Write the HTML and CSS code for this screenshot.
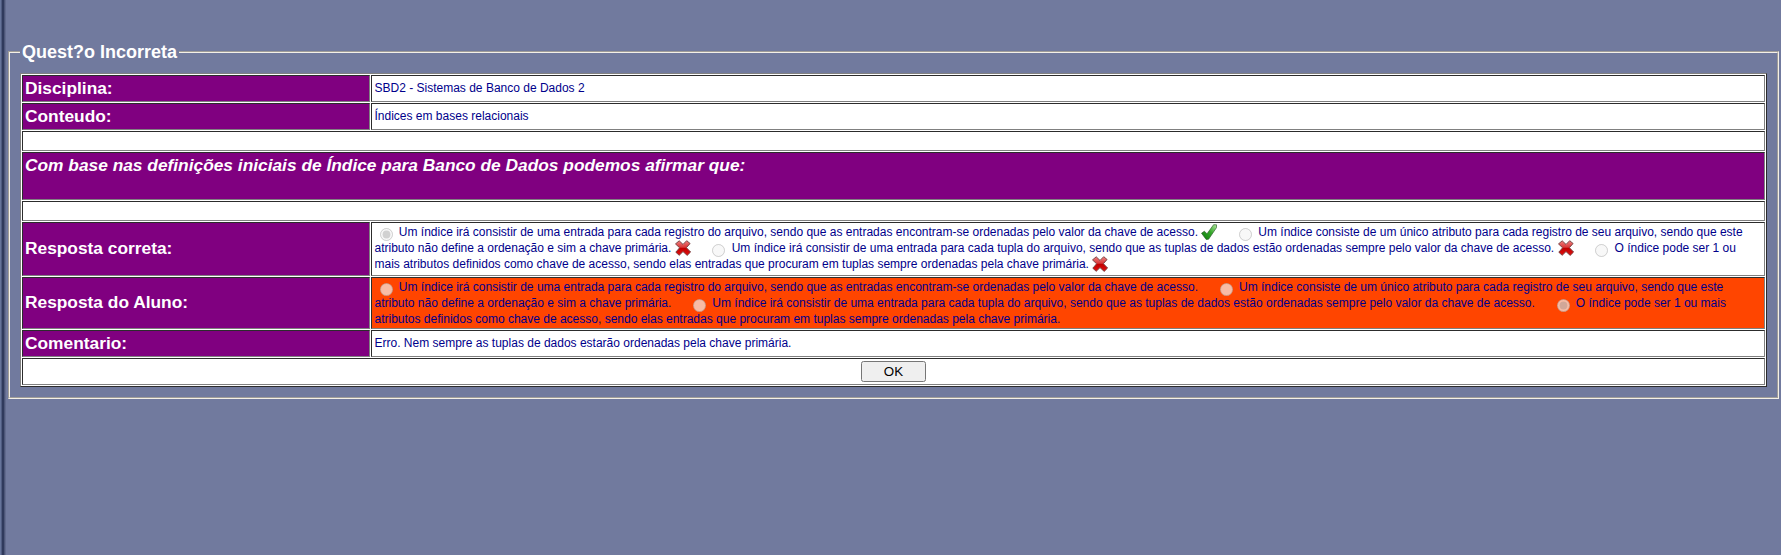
FILE: index.html
```
<!DOCTYPE html>
<html lang="pt-BR">
<head>
<meta charset="utf-8">
<title>Questão Incorreta</title>
<link rel="stylesheet" href="styles.css">
</head>
<body>
<svg class="defs" width="0" height="0" aria-hidden="true">
  <defs>
    <linearGradient id="red" x1="0" y1="0" x2="0" y2="1"><stop offset="0" stop-color="#f08080"/><stop offset=".45" stop-color="#d83a3a"/><stop offset=".5" stop-color="#c00000"/><stop offset="1" stop-color="#e01010"/></linearGradient>
    <linearGradient id="green" x1="1" y1="0" x2="0" y2="1"><stop offset="0" stop-color="#b5e8a0"/><stop offset=".45" stop-color="#35a82a"/><stop offset="1" stop-color="#087808"/></linearGradient>
    <symbol id="wrong" viewBox="0 0 16 16"><path d="M4.2.8 8 4.4 11.7.7l3.4 2.8-3.7 4.2 4.2 4.3-3.4 3.4L8 11.6l-3.8 3.7L.8 12.2l3.8-4.4L.5 3.9z" fill="url(#red)" stroke="#704040" stroke-width=".9" stroke-linejoin="round"/></symbol>
    <symbol id="right" viewBox="0 0 16 16"><path d="M.5 9.2 3.4 7.2 6 9.8 12.6.7 15.6.8 15.5 3.6 7.6 15.2 5.2 15.5z" fill="url(#green)" stroke="#306030" stroke-width=".7" stroke-linejoin="round"/></symbol>
  </defs>
</svg>
<fieldset class="panel">
<legend class="title">Quest?o Incorreta</legend>
<table class="grid" border="1" cellspacing="1" cellpadding="1">
<tr class="row"><td class="label">Disciplina:</td><td class="value">SBD2 - Sistemas de Banco de Dados 2</td></tr>
<tr class="row"><td class="label">Conteudo:</td><td class="value">Índices em bases relacionais</td></tr>
<tr class="gap"><td colspan="2"></td></tr>
<tr class="question"><td class="label" colspan="2"><i>Com base nas definições iniciais de Índice para Banco de Dados podemos afirmar que:</i></td></tr>
<tr class="gap"><td colspan="2"></td></tr>
<tr class="correct"><td class="label">Resposta correta:</td><td class="value answers"><input type="radio" disabled checked>&nbsp;Um índice irá consistir de uma entrada para cada registro do arquivo, sendo que as entradas encontram-se ordenadas pelo valor da chave de acesso.&nbsp;<svg class="mark"><use href="#right"/></svg>&nbsp;&nbsp;&nbsp;&nbsp; <input type="radio" disabled>&nbsp;Um índice consiste de um único atributo para cada registro de seu arquivo, sendo que este atributo não define a ordenação e sim a chave primária.&nbsp;<svg class="mark"><use href="#wrong"/></svg>&nbsp;&nbsp;&nbsp;&nbsp; <input type="radio" disabled>&nbsp;Um índice irá consistir de uma entrada para cada tupla do arquivo, sendo que as tuplas de dados estão ordenadas sempre pelo valor da chave de acesso.&nbsp;<svg class="mark"><use href="#wrong"/></svg>&nbsp;&nbsp;&nbsp;&nbsp; <input type="radio" disabled>&nbsp;O índice pode ser 1 ou mais atributos definidos como chave de acesso, sendo elas entradas que procuram em tuplas sempre ordenadas pela chave primária.&nbsp;<svg class="mark"><use href="#wrong"/></svg></td></tr>
<tr class="student"><td class="label">Resposta do Aluno:</td><td class="value answers chosen"><input type="radio" disabled>&nbsp;Um índice irá consistir de uma entrada para cada registro do arquivo, sendo que as entradas encontram-se ordenadas pelo valor da chave de acesso.&nbsp;&nbsp;&nbsp;&nbsp; <input type="radio" disabled>&nbsp;Um índice consiste de um único atributo para cada registro de seu arquivo, sendo que este atributo não define a ordenação e sim a chave primária.&nbsp;&nbsp;&nbsp;&nbsp; <input type="radio" disabled>&nbsp;Um índice irá consistir de uma entrada para cada tupla do arquivo, sendo que as tuplas de dados estão ordenadas sempre pelo valor da chave de acesso.&nbsp;&nbsp;&nbsp;&nbsp; <input type="radio" disabled checked>&nbsp;O índice pode ser 1 ou mais atributos definidos como chave de acesso, sendo elas entradas que procuram em tuplas sempre ordenadas pela chave primária.</td></tr>
<tr class="row"><td class="label">Comentario:</td><td class="value">Erro. Nem sempre as tuplas de dados estarão ordenadas pela chave primária.</td></tr>
<tr class="row"><td class="action" colspan="2"><button class="ok" type="button">OK</button></td></tr>
</table>
</fieldset>
</body>
</html>
```
FILE: styles.css
```
html { height: 100%; }
body {
  margin: 0;
  min-height: 100%;
  box-sizing: border-box;
  padding: 41px 2px 0 8px;
  background: linear-gradient(to right, #66749a 0, #66749a 1px, #4f5b80 1px, #4f5b80 2px, #303a5c 2px, #303a5c 4px, #4d5678 4px, #4d5678 5px, #626b8e 5px, #626b8e 6px, #717a9e 6px);
  font: 12px/16px "Liberation Sans", Arial, sans-serif;
  color: #00008b;
}
.defs { position: absolute; }
.panel { margin: 0; padding: 10px; border: 2px groove #f4f0e8; }
.title { padding: 0 2px; font-size: 18px; line-height: 22px; font-weight: bold; color: #fff; }
.grid {
  width: 1747px;
  table-layout: fixed;
  background: #fff;
  border: 1px solid;
  border-color: #808080 #2c2c2c #2c2c2c #808080;
  border-collapse: separate;
  color: #00008b;
}
.grid td {
  box-sizing: border-box;
  padding: 1px 2px;
  border: 1px solid;
  border-color: #2c2c2c #808080 #808080 #2c2c2c;
  background: #fff;
}
.grid .label { width: 348px; padding-bottom: 3px; background: purple; color: #fff; font-size: 17.333px; line-height: 20px; font-weight: bold; }
.grid .value { padding-left: 2.5px; padding-bottom: 3px; }
.row { height: 27px; }
.gap { height: 20px; }
.question { height: 48px; vertical-align: top; }
.grid .question .label { padding-top: 2px; }
.correct { height: 54px; }
.student { height: 52px; }
.grid .answers { padding-bottom: 0; vertical-align: top; }
.answers input { width: 13px; height: 13px; margin: 3px 3px -5px 5px; vertical-align: -5px; }
.mark { width: 16px; height: 16px; margin: -4px 0; vertical-align: 0; }
.grid .chosen { background: #ff4500; }
.action { text-align: center; }
.ok { display: block; width: 65px; height: 21px; margin: 0 auto; padding: 0; font: 13.333px "Liberation Sans", Arial, sans-serif; }
```
